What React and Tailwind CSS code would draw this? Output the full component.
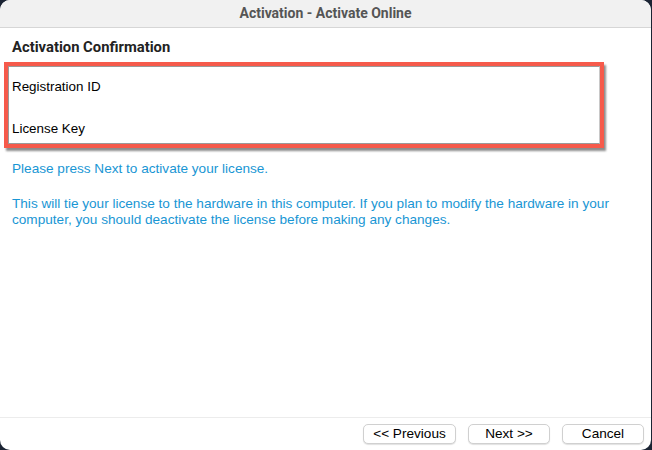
import React from 'react';

const ActivateOnline = () => {
  const buttons = [
    { label: '<< Previous', w: 'w-[93px]' },
    { label: 'Next >>', w: 'w-[82px]' },
    { label: 'Cancel', w: 'w-[82px]' },
  ];

  return (
    <div className="w-[652px] h-[450px] bg-[#1b2434] font-['Liberation_Sans',Arial,sans-serif]">
      <div className="w-[651px] h-[450px] bg-white rounded-[10px] overflow-hidden flex flex-col">
        {/* title bar */}
        <div className="h-[28px] shrink-0 bg-[#f1f1f1] border-b border-[#d6d6d6] flex items-center justify-center">
          <span className="text-[14px] font-bold text-[#555] font-['Roboto',sans-serif]">Activation - Activate Online</span>
        </div>

        <div className="flex-1 px-[12px] pt-[10px]">
          <h2 className="text-[14.8px] font-bold text-[#222] font-['Roboto',sans-serif] leading-[18px]">Activation Confirmation</h2>

          <div className="mt-[6px] -ml-[8px] w-[600px] h-[86px] border-[4px] border-[#f65a4b] shadow-[2px_3px_2px_rgba(0,0,0,0.45)]">
            <div className="h-full border border-[#9a9a9a] border-r-[#c8c8c8] px-[3px] pt-[12px] pb-[6px] flex flex-col justify-between text-[13.4px] text-black leading-[16px]">
              <span>Registration ID</span>
              <span>License Key</span>
            </div>
          </div>

          <div className="mt-[13px] text-[13.6px] text-[#1996d4] leading-[16px]">
            <p>Please press Next to activate your license.</p>
            <p className="mt-[19px] w-[625px]">
              This will tie your license to the hardware in this computer. If you plan to modify the hardware in your computer, you should deactivate the license before making any changes.
            </p>
          </div>
        </div>

        {/* footer */}
        <div className="h-[33px] shrink-0 border-t border-[#ececec] flex items-center justify-end gap-[12px] pr-[7px]">
          {buttons.map((b) => (
            <button
              key={b.label}
              className={`${b.w} h-[20px] rounded-[5px] bg-white border border-[#d0d0d0] shadow-[0_1px_1px_rgba(0,0,0,0.12)] text-[13.6px] text-black leading-none`}
            >
              {b.label}
            </button>
          ))}
        </div>
      </div>
    </div>
  );
};

export default function App() {
  return <ActivateOnline />;
}
